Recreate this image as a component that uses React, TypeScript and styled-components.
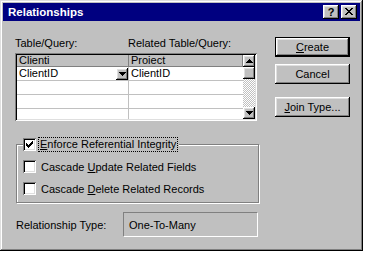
import React from "react";
import styled, { createGlobalStyle } from "styled-components";

const Global = createGlobalStyle`
  html, body { margin: 0; padding: 0; background: #fff; }
  body { font-family: "Liberation Sans", Arial, sans-serif; font-size: 11px; color: #000; }
  * { box-sizing: border-box; }
`;

const raised = `box-shadow: inset -1px -1px #000, inset 1px 1px #fff, inset -2px -2px #808080, inset 2px 2px #dfdfdf;`;

const Window = styled.div`
  width: 363px;
  height: 251px;
  background: #c0c0c0;
  padding: 3px;
  box-shadow: inset -1px -1px #000, inset 1px 1px #dfdfdf, inset -2px -2px #808080, inset 2px 2px #fff;
  display: flex;
  flex-direction: column;
`;

const TitleBar = styled.div`
  height: 18px;
  background: #000080;
  color: #fff;
  display: flex;
  align-items: center;
  justify-content: space-between;
  padding: 0 3px 0 5px;
  font-weight: bold;
  font-size: 11.5px;
`;

const TitleButtons = styled.div`
  display: flex;
  gap: 2px;
`;

const TitleButton = styled.div`
  width: 16px;
  height: 14px;
  background: #c0c0c0;
  ${raised}
  display: flex;
  align-items: center;
  justify-content: center;
  color: #000;
  font-size: 11px;
  font-weight: bold;
  padding-bottom: 1px;
`;

const Body = styled.div`
  display: flex;
  padding: 16px 0 0 12px;
`;

const LeftCol = styled.div`
  width: 246px;
  display: flex;
  flex-direction: column;
`;

const RightCol = styled.div`
  margin-left: 14px;
  display: flex;
  flex-direction: column;
`;

const Labels = styled.div`
  display: grid;
  grid-template-columns: 113px 1fr;
  height: 16px;
  line-height: 13px;
`;

const GridBox = styled.div`
  width: 242px;
  height: 68px;
  padding: 2px;
  background: #fff;
  box-shadow: inset 1px 1px #808080, inset -1px -1px #fff, inset 2px 2px #000, inset -2px -2px #dfdfdf;
  display: flex;
`;

const Table = styled.div`
  flex: 1;
  display: grid;
  grid-template-columns: 112px 1fr;
  grid-template-rows: 12px repeat(4, 14px);
  overflow: hidden;
`;

const HeaderCell = styled.div`
  background: #c0c0c0;
  border-bottom: 1px solid #808080;
  border-right: 1px solid #808080;
  padding-left: 2px;
  line-height: 11px;
`;

const Cell = styled.div<{ $last?: boolean }>`
  border-bottom: 1px solid #c0c0c0;
  border-right: ${(p) => (p.$last ? "none" : "1px solid #c0c0c0")};
  padding-left: 2px;
  display: flex;
  align-items: center;
  justify-content: space-between;
  line-height: 13px;
`;

const SmallButton = styled.div`
  width: 12px;
  height: 12px;
  background: #c0c0c0;
  ${raised}
  display: flex;
  align-items: center;
  justify-content: center;
  flex: none;
`;

const ScrollBar = styled.div`
  width: 12px;
  display: flex;
  flex-direction: column;
`;

const Track = styled.div`
  flex: 1;
  background: repeating-conic-gradient(#c0c0c0 0 25%, #fff 0 50%) 0 0 / 2px 2px;
`;

const Button = styled.div<{ $default?: boolean; $gap?: number }>`
  width: 75px;
  height: 20px;
  margin-top: ${(p) => p.$gap ?? 0}px;
  background: #c0c0c0;
  display: flex;
  align-items: center;
  justify-content: center;
  box-shadow: ${(p) =>
    p.$default
      ? "inset 0 0 0 1px #000, inset -2px -2px #000, inset 2px 2px #fff, inset -3px -3px #808080, inset 3px 3px #dfdfdf"
      : "inset -1px -1px #000, inset 1px 1px #fff, inset -2px -2px #808080, inset 2px 2px #dfdfdf"};
`;

const Key = styled.span`
  text-decoration: underline;
  text-underline-offset: 1px;
`;

const Group = styled.fieldset`
  margin: 17px 0 0 1px;
  padding: 0 0 7px 6px;
  width: 243px;
  min-inline-size: 0;
  border: 1px solid #808080;
  box-shadow: 1px 1px 0 #fff, inset 1px 1px 0 #fff;
`;

const Legend = styled.legend`
  padding: 0 2px 0 0;
  background: #c0c0c0;
  display: flex;
  align-items: center;
  gap: 3px;
`;

const GroupRows = styled.div`
  display: flex;
  flex-direction: column;
  gap: 9px;
  padding-top: 9px;
`;

const CheckRow = styled.div`
  display: flex;
  align-items: center;
  gap: 5px;
  height: 13px;
`;

const Box = styled.div`
  width: 13px;
  height: 13px;
  background: #fff;
  box-shadow: inset 1px 1px #808080, inset -1px -1px #fff, inset 2px 2px #000, inset -2px -2px #dfdfdf;
  display: flex;
  align-items: center;
  justify-content: center;
  flex: none;
`;

const Focus = styled.span`
  outline: 1px dotted #000;
  outline-offset: 0;
  padding: 0 1px;
  line-height: 13px;
`;

const TypeRow = styled.div`
  display: flex;
  align-items: center;
  margin: 9px 0 0 1px;
`;

const TypeLabel = styled.div`
  width: 107px;
`;

const TypeBox = styled.div`
  width: 135px;
  height: 25px;
  border-top: 1px solid #808080;
  border-left: 1px solid #808080;
  border-bottom: 1px solid #fff;
  border-right: 1px solid #fff;
  padding-left: 5px;
  display: flex;
  align-items: center;
`;

const DownArrow = () => (
  <svg width="7" height="4" viewBox="0 0 7 4" shapeRendering="crispEdges">
    <polygon points="0,0 7,0 3.5,4" fill="#000" />
  </svg>
);

const UpArrow = () => (
  <svg width="7" height="4" viewBox="0 0 7 4" shapeRendering="crispEdges">
    <polygon points="0,4 7,4 3.5,0" fill="#000" />
  </svg>
);

const CheckMark = () => (
  <svg width="7" height="7" viewBox="0 0 7 7" shapeRendering="crispEdges">
    {[2, 3, 4, 3, 2, 1, 0].map((y, x) => (
      <rect key={x} x={x} y={y} width="1" height="3" fill="#000" />
    ))}
  </svg>
);

const CloseGlyph = () => (
  <svg width="8" height="7" viewBox="0 0 8 7" shapeRendering="crispEdges">
    <path d="M0.5 0 L7.5 7 M7.5 0 L0.5 7" stroke="#000" strokeWidth="1.6" />
  </svg>
);

export default function App() {
  return (
    <>
      <Global />
      <Window>
        <TitleBar>
          <span>Relationships</span>
          <TitleButtons>
            <TitleButton>?</TitleButton>
            <TitleButton>
              <CloseGlyph />
            </TitleButton>
          </TitleButtons>
        </TitleBar>
        <Body>
          <LeftCol>
            <Labels>
              <span>Table/Query:</span>
              <span>Related Table/Query:</span>
            </Labels>
            <GridBox>
              <Table>
                <HeaderCell>Clienti</HeaderCell>
                <HeaderCell>Proiect</HeaderCell>
                <Cell>
                  <span>ClientID</span>
                  <SmallButton>
                    <DownArrow />
                  </SmallButton>
                </Cell>
                <Cell $last>ClientID</Cell>
                <Cell />
                <Cell $last />
                <Cell />
                <Cell $last />
                <Cell />
                <Cell $last />
              </Table>
              <ScrollBar>
                <SmallButton>
                  <UpArrow />
                </SmallButton>
                <SmallButton />
                <Track />
                <SmallButton>
                  <DownArrow />
                </SmallButton>
              </ScrollBar>
            </GridBox>
            <Group>
              <Legend>
                <Box>
                  <CheckMark />
                </Box>
                <Focus>
                  <Key>E</Key>nforce Referential Integrity
                </Focus>
              </Legend>
              <GroupRows>
                <CheckRow>
                  <Box />
                  <span>
                    Cascade <Key>U</Key>pdate Related Fields
                  </span>
                </CheckRow>
                <CheckRow>
                  <Box />
                  <span>
                    Cascade <Key>D</Key>elete Related Records
                  </span>
                </CheckRow>
              </GroupRows>
            </Group>
            <TypeRow>
              <TypeLabel>Relationship Type:</TypeLabel>
              <TypeBox>One-To-Many</TypeBox>
            </TypeRow>
          </LeftCol>
          <RightCol>
            <Button $default>
              <span>
                <Key>C</Key>reate
              </span>
            </Button>
            <Button $gap={7}>Cancel</Button>
            <Button $gap={13}>
              <span>
                <Key>J</Key>oin Type...
              </span>
            </Button>
          </RightCol>
        </Body>
      </Window>
    </>
  );
}
